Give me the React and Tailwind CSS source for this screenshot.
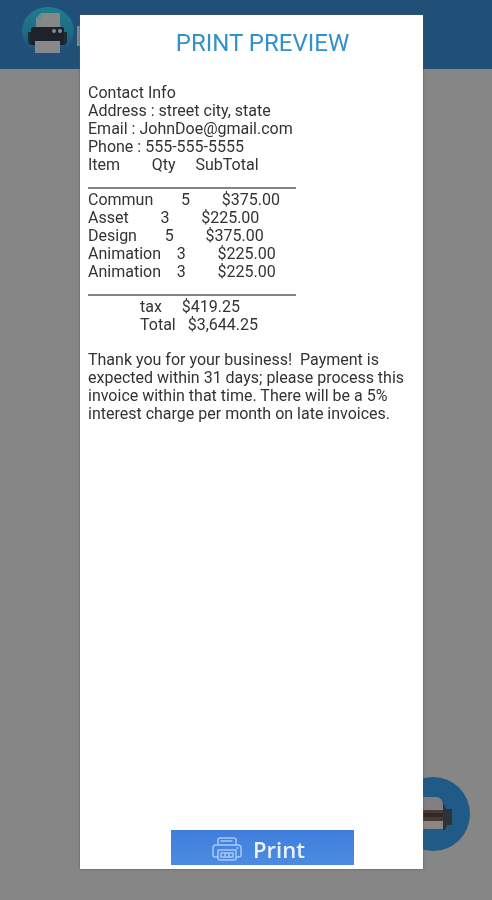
const contactLines = [
  "Contact Info",
  "Address : street city, state",
  "Email : JohnDoe@gmail.com",
  "Phone : 555-555-5555",
];

const items = [
  { name: "Commun", qty: 5, subTotal: "$375.00" },
  { name: "Asset", qty: 3, subTotal: "$225.00" },
  { name: "Design", qty: 5, subTotal: "$375.00" },
  { name: "Animation", qty: 3, subTotal: "$225.00" },
  { name: "Animation", qty: 3, subTotal: "$225.00" },
];

function AppLogo() {
  return (
    <svg viewBox="0 0 54 50" className="h-[50px] w-[54px] shrink-0" aria-hidden="true">
      <defs>
        <linearGradient id="logoFill" x1="0" y1="0" x2="0" y2="1">
          <stop offset="0" stopColor="#1f7d8c" />
          <stop offset="0.5" stopColor="#1f6c85" />
          <stop offset="0.9" stopColor="#205078" />
        </linearGradient>
      </defs>
      <ellipse cx="28" cy="25" rx="26" ry="24" fill="url(#logoFill)" />
      <path d="M21 7h19v15H16V12z" fill="#858887" />
      <path d="M21 7v6h-5z" fill="#4f9298" />
      <path d="M8 26h4v13h-2l-2-3zM43 26h4v10l-2 3h-2z" fill="#1b2b38" />
      <path d="M13 21h29a2 2 0 0 1 2 2v16H11V23a2 2 0 0 1 2-2z" fill="#1d2328" />
      <circle cx="34" cy="25" r="2" fill="#7f8c92" />
      <circle cx="40" cy="25" r="2" fill="#7f8c92" />
      <path d="M15 35h25v12H15z" fill="#87888b" />
    </svg>
  );
}

function PrinterPhoto() {
  return (
    <svg viewBox="0 0 74 74" className="h-[74px] w-[74px]" aria-hidden="true">
      <path d="M10 20h31q5 1 6 7v25H10z" fill="#817f81" />
      <path d="M5 33h42v11H5z" fill="#453a35" />
      <path d="M10 36h37v4H10z" fill="#302925" />
      <path d="M10 44h37v8H10z" fill="#8c8582" />
      <path d="M48 27l2 5h6v16h-5l-2 5h-2V27z" fill="#2f3337" />
    </svg>
  );
}

function PrintIcon() {
  return (
    <svg
      viewBox="0 0 30 24"
      className="h-[24px] w-[30px]"
      fill="none"
      stroke="#a9c8f5"
      strokeWidth="1.5"
      strokeLinecap="round"
      strokeLinejoin="round"
      aria-hidden="true"
    >
      <path d="M6 8V3a2 2 0 0 1 2-2h14a2 2 0 0 1 2 2v5" />
      <path d="M9 4h12" strokeDasharray="2 1" />
      <path d="M6 20H3a2 2 0 0 1-2-2v-7a3 3 0 0 1 3-3h22a3 3 0 0 1 3 3v7a2 2 0 0 1-2 2h-3" />
      <path d="M25 11h1M6 13h18v8a2 2 0 0 1-2 2H8a2 2 0 0 1-2-2z" />
      <path d="M9 16h12v4H9zM13 16v4M16 16l2 4" />
    </svg>
  );
}

export default function App() {
  return (
    <div className="min-h-screen bg-[#868686] font-['Roboto',sans-serif]">
      <header className="flex h-[69px] items-start bg-[#205078] pl-5 pt-1.5">
        <AppLogo />
        <span className="ml-[3px] mt-5 h-5 w-1 bg-[#7d8a96]" />
      </header>

      <button
        aria-label="Open printer"
        className="fixed bottom-[49px] right-[22px] overflow-hidden rounded-full bg-[#205a86]"
      >
        <PrinterPhoto />
      </button>

      <div className="fixed inset-0 flex pb-[31px] pl-20 pr-[69px] pt-[15px]">
        <section
          role="dialog"
          aria-labelledby="preview-title"
          className="flex w-full flex-col bg-white shadow-[0_0_2px_#555]"
        >
          <h1
            id="preview-title"
            className="pl-[22px] pt-3 text-center text-2xl leading-8 text-[#3290cb]"
          >
            PRINT PREVIEW
          </h1>

          <div className="flex-1 px-2 pt-[25px] text-base leading-[18px] text-[#333]">
            {contactLines.map((line) => (
              <p key={line}>{line}</p>
            ))}

            <table className="block">
              <thead className="block w-[208px] border-b-2 border-[#858585] pb-[13px]">
                <tr className="flex whitespace-pre">
                  <th className="font-normal">{"Item".padEnd(12)}</th>
                  <th className="font-normal">{"Qty".padEnd(8)}</th>
                  <th className="font-normal">SubTotal</th>
                </tr>
              </thead>
              <tbody className="block pt-0.5">
                {items.map((item, i) => (
                  <tr key={i} className="flex whitespace-pre">
                    <td>{item.name.padEnd(13)}</td>
                    <td>{String(item.qty).padEnd(9)}</td>
                    <td>{item.subTotal}</td>
                  </tr>
                ))}
              </tbody>
              <tfoot className="mt-[13px] block w-[208px] border-t-2 border-[#858585] pl-[52px] pt-0.5">
                <tr className="flex whitespace-pre">
                  <th className="font-normal">{"tax".padEnd(8)}</th>
                  <td>$419.25</td>
                </tr>
                <tr className="flex whitespace-pre">
                  <th className="font-normal">{"Total".padEnd(8)}</th>
                  <td>$3,644.25</td>
                </tr>
              </tfoot>
            </table>

            <p className="pt-[17px] whitespace-pre-wrap">
              {
                "Thank you for your business!  Payment is expected within 31 days; please process this invoice within that time. There will be a 5% interest charge per month on late invoices."
              }
            </p>
          </div>

          <div className="flex justify-center pb-1 pl-[22px]">
            <button className="flex h-[35px] w-[183px] items-center justify-center gap-[11px] bg-linear-to-b from-[#407ddd] to-[#4b8ce0] pr-2 pt-0.5 font-['Open_Sans',sans-serif] text-[22px] leading-6 font-semibold text-[#e8f1fd]">
              <PrintIcon />
              Print
            </button>
          </div>
        </section>
      </div>
    </div>
  );
}
